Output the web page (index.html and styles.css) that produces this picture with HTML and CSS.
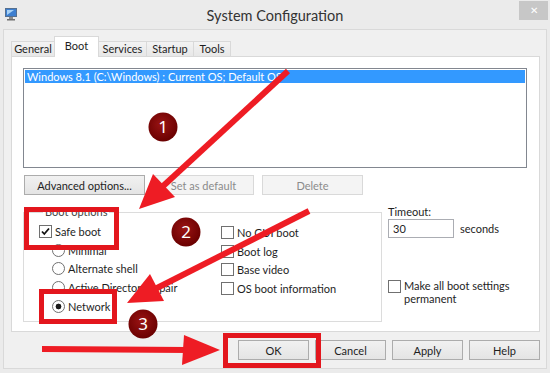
FILE: index.html
```html
<!DOCTYPE html>
<html lang="en">
<head>
  <meta charset="UTF-8" />
  <meta name="viewport" content="width=device-width, initial-scale=1.0" />
  <title>System Configuration</title>
  <link rel="stylesheet" href="styles.css">
</head>
<body>
  <div class="titlebar">
    <svg class="app-icon" width="14" height="14" viewBox="0 0 14 14">
      <rect x="1.5" y="1.5" width="11" height="8" fill="#3d7fd0" stroke="#56708f"/>
      <path d="M3 3 L10 3 L3 8 Z" fill="#a9d2f5"/>
      <rect x="5" y="10" width="4" height="2" fill="#8c8c8c"/>
      <rect x="3" y="12" width="8" height="1.5" fill="#6f6f6f"/>
    </svg>
    <div class="title">System Configuration</div>
    <div class="close">&#x2715;</div>
  </div>

  <div class="client">
    <div class="tabs">
      <div class="tab tab-general">General</div>
      <div class="tab tab-boot active">Boot</div>
      <div class="tab tab-services">Services</div>
      <div class="tab tab-startup">Startup</div>
      <div class="tab tab-tools">Tools</div>
    </div>

    <div class="panel">
      <div class="oslist">
        <div class="os-row selected">Windows 8.1 (C:\Windows) : Current OS; Default OS</div>
      </div>

      <div class="row-buttons">
        <button class="btn btn-adv">Advanced options...</button>
        <button class="btn btn-mid" disabled>Set as default</button>
        <button class="btn btn-mid" disabled>Delete</button>
      </div>

      <div class="lower">
        <fieldset class="group">
          <legend>Boot options</legend>
          <div class="options">
            <div class="col">
              <div class="opt"><span class="check checked"><svg width="11" height="11" viewBox="0 0 11 11"><path d="M2 5.5 L4.3 8 L9 2.5" fill="none" stroke="#111" stroke-width="1.8"/></svg></span>Safe boot</div>
              <div class="sub">
                <div class="opt"><span class="radio"></span>Minimal</div>
                <div class="opt"><span class="radio"></span>Alternate shell</div>
                <div class="opt"><span class="radio"></span>Active Directory repair</div>
                <div class="opt"><span class="radio checked"></span>Network</div>
              </div>
            </div>
            <div class="col col-right">
              <div class="opt"><span class="check"></span>No GUI boot</div>
              <div class="opt"><span class="check"></span>Boot log</div>
              <div class="opt"><span class="check"></span>Base video</div>
              <div class="opt"><span class="check"></span>OS boot information</div>
            </div>
          </div>
        </fieldset>

        <div class="timeout">
          <div class="timeout-label">Timeout:</div>
          <div class="timeout-row">
            <div class="field">30</div>
            <span>seconds</span>
          </div>
          <div class="opt permanent"><span class="check"></span><span>Make all boot settings<br>permanent</span></div>
        </div>
      </div>
    </div>

    <div class="footer">
      <button class="btn btn-foot">OK</button>
      <button class="btn btn-foot">Cancel</button>
      <button class="btn btn-foot">Apply</button>
      <button class="btn btn-foot">Help</button>
    </div>
  </div>

  <!-- red tutorial markings drawn over the dialog -->
  <svg class="annotations" width="550" height="373" viewBox="0 0 550 373">
    <defs>
      <radialGradient id="dot" cx="45%" cy="40%" r="60%">
        <stop offset="0" stop-color="#9a1414"/>
        <stop offset="1" stop-color="#6a0000"/>
      </radialGradient>
    </defs>
    <g fill="none" stroke="#e3161d" stroke-width="5">
      <rect x="26.5" y="209.5" width="90" height="38"/>
      <rect x="41.5" y="291.5" width="73" height="30"/>
      <rect x="225.5" y="335.5" width="93" height="30"/>
    </g>
    <g fill="#ee1c24" stroke="#ee1c24" stroke-width="6">
      <line x1="288" y1="71" x2="161" y2="188"/>
      <polygon stroke="none" points="139,209 153,174 175,197"/>
      <line x1="309" y1="211" x2="155" y2="289"/>
      <polygon stroke="none" points="127,303 150,274 164,301"/>
      <line x1="42" y1="349" x2="188" y2="350"/>
      <polygon stroke="none" points="220,350 184,335 182,365"/>
    </g>
    <g fill="url(#dot)">
      <circle cx="163" cy="127" r="14.5"/>
      <circle cx="186" cy="232" r="14.5"/>
      <circle cx="143" cy="324" r="14.5"/>
    </g>
    <g class="num" fill="#fff" text-anchor="middle">
      <text x="163" y="133">1</text>
      <text x="186" y="238">2</text>
      <text x="143" y="330">3</text>
    </g>
  </svg>
</body>
</html>
```

FILE: styles.css
```css
* {
  box-sizing: border-box;
}
body {
  margin: 0;
  width: 550px;
  height: 373px;
  position: relative;
  overflow: hidden;
  background: #ebebeb;
  font-family: Lato, "Noto Sans", sans-serif;
  font-size: 11px;
  color: #1e1e1e;
}

/* title bar */
.titlebar {
  height: 29px;
  display: grid;
  grid-template-columns: 1fr auto 1fr;
  align-items: center;
}
.app-icon {
  margin-left: 4px;
  margin-top: -2px;
}
.title {
  font-size: 14.5px;
  color: #333;
  padding-top: 1px;
}
.close {
  justify-self: end;
  align-self: start;
  width: 29px;
  height: 19px;
  margin: 1px 2px 0 0;
  background: #c7c7c7;
  color: #fff;
  font-size: 10px;
  line-height: 19px;
  text-align: center;
}

/* dialog body */
.client {
  margin: 0 3px;
  height: 340px;
  border: 1px solid #d9d9d9;
  background: #f0f0f0;
  padding: 6px 6px 0 7px;
}
.tabs {
  display: flex;
  align-items: flex-end;
  height: 21px;
  margin-bottom: -1px;
  position: relative;
  z-index: 1;
}
.tab {
  height: 15px;
  margin-bottom: 1px;
  margin-left: -1px;
  border: 1px solid #d9d9d9;
  border-bottom: none;
  background: linear-gradient(#f3f3f3, #e7e7e7);
  line-height: 14px;
  text-align: center;
}
.tab-general { width: 44px; margin-left: 0; }
.tab-boot { width: 45px; }
.tab-services { width: 49px; }
.tab-startup { width: 48px; }
.tab-tools { width: 38px; }
.tab.active {
  height: 21px;
  margin-bottom: 0;
  background: #fff;
  padding-top: 2px;
}

.panel {
  height: 276px;
  border: 1px solid #d9d9d9;
  background: #fff;
  padding: 11px 12px 0 11px;
}
.oslist {
  height: 100px;
  border: 1px solid #828790;
  padding: 1px;
}
.os-row {
  height: 13px;
  line-height: 13px;
  padding-left: 2px;
}
.os-row.selected {
  background: #3399ff;
  color: #fff;
}

.row-buttons {
  display: flex;
  gap: 8px;
  margin-top: 7px;
  padding-left: 1px;
}
.btn {
  height: 20px;
  padding: 0;
  border: 1px solid #acacac;
  border-radius: 0;
  background: linear-gradient(#f1f1f1, #e4e4e4);
  font: inherit;
  color: #1e1e1e;
}
.btn:disabled {
  background: #f4f4f4;
  border-color: #d9d9d9;
  color: #8b8b8b;
}
.btn-adv { width: 121px; }
.btn-mid { width: 101px; }

.lower {
  display: flex;
  gap: 6px;
  margin-top: 10px;
}
.group {
  width: 359px;
  height: 117px;
  margin: 0;
  padding: 3px 0 0 15px;
  border: 1px solid #dcdcdc;
  min-width: 0;
}
.group legend {
  padding: 0 2px;
  margin-left: 4px;
  line-height: 14px;
  color: #444;
}
.options {
  display: grid;
  grid-template-columns: 182px 1fr;
}
.col-right {
  padding-top: 1px;
}
.sub {
  padding-left: 13px;
}
.opt {
  display: flex;
  align-items: center;
  gap: 3px;
  height: 18.7px;
  white-space: nowrap;
}
.check {
  flex: none;
  width: 13px;
  height: 13px;
  border: 1px solid #707070;
  background: #fff;
  display: flex;
}
.radio {
  flex: none;
  width: 13px;
  height: 13px;
  border: 1px solid #707070;
  border-radius: 50%;
  background: #fff;
}
.radio.checked {
  background: radial-gradient(circle, #1a1a1a 0 2.6px, #fff 3.2px);
}

.timeout-label {
  line-height: 14px;
}
.timeout-row {
  display: flex;
  align-items: center;
  gap: 6px;
}
.field {
  width: 66px;
  height: 19px;
  border: 1px solid #abadb3;
  background: #fff;
  padding-left: 4px;
  line-height: 17px;
}
.opt.permanent {
  height: auto;
  align-items: flex-start;
  margin-top: 41px;
  line-height: 13px;
}
.opt.permanent .check {
  margin-top: 1px;
}

.footer {
  display: flex;
  justify-content: flex-end;
  gap: 6px;
  margin-top: 8px;
}
.btn-foot { width: 71px; }

/* overlay */
.annotations {
  position: absolute;
  top: 0;
  left: 0;
  pointer-events: none;
}
.num {
  font-family: "Noto Sans", sans-serif;
  font-size: 17px;
}
```
